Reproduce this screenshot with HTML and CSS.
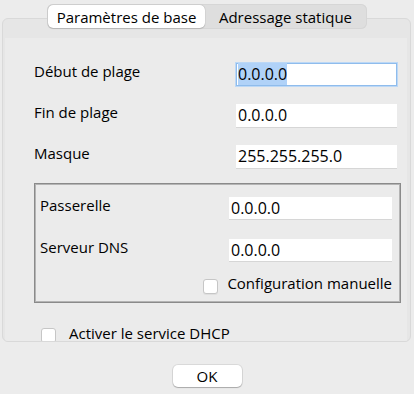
FILE: index.html
```html
<!DOCTYPE html>
<html lang="fr">
<head>
    <meta charset="UTF-8">
    <meta name="viewport" content="width=device-width, initial-scale=1.0">
    <title>DHCP</title>
    <link rel="stylesheet" href="styles.css">
</head>
<body>
    <div class="dialog">
        <div class="tabs">
            <div class="tab tab-active">Paramètres de base</div>
            <div class="tab">Adressage statique</div>
        </div>

        <div class="panel">
            <div class="content">
                <div class="row">
                    <span class="label">Début de plage</span>
                    <div class="field field-focus"><span class="sel">0.0.0.0</span></div>
                </div>
                <div class="row">
                    <span class="label">Fin de plage</span>
                    <div class="field">0.0.0.0</div>
                </div>
                <div class="row">
                    <span class="label">Masque</span>
                    <div class="field">255.255.255.0</div>
                </div>

                <div class="group">
                    <div class="row row-small">
                        <span class="label">Passerelle</span>
                        <div class="field">0.0.0.0</div>
                    </div>
                    <div class="row row-small">
                        <span class="label">Serveur DNS</span>
                        <div class="field">0.0.0.0</div>
                    </div>
                    <label class="check check-right">
                        <span class="box"></span>
                        <span>Configuration manuelle</span>
                    </label>
                </div>

                <label class="check check-dhcp">
                    <span class="box"></span>
                    <span>Activer le service DHCP</span>
                </label>
            </div>
        </div>

        <div class="actions">
            <button class="btn">OK</button>
        </div>
    </div>
</body>
</html>
```

FILE: styles.css
```css
body {
    margin: 0;
    background-color: #ececec;
    font-family: "Open Sans", "Liberation Sans", sans-serif;
    color: #000;
}
.dialog {
    height: 394px;
    display: flex;
    flex-direction: column;
}
.tabs {
    position: relative;
    z-index: 1;
    align-self: center;
    display: flex;
    width: 320px;
    height: 25px;
    margin-top: 4px;
    margin-bottom: -11px;
    padding: 1px;
    box-sizing: border-box;
    background-color: #dedede;
    border-radius: 6px;
    box-shadow: inset 0 0 0 1px #d6d6d6;
}
.tab {
    flex: 1;
    display: flex;
    align-items: center;
    justify-content: center;
    font-size: 15px;
    color: #000;
}
.tab-active {
    flex: 0 0 157px;
    background: white;
    border-radius: 5px;
    box-shadow: 0 0 1px rgba(0,0,0,0.35), 0 1px 1px rgba(0,0,0,0.12);
}
.panel {
    height: 324px;
    margin: 0 3px 0 2px;
    box-sizing: border-box;
    border: 1px solid #d9d9d9;
    border-radius: 6px;
    background-color: #e6e6e6;
    overflow: hidden;
    display: flex;
}
.content {
    flex: 1;
    margin: 19px 3px 0 2px;
    padding: 25px 6px 0 29px;
    background-color: #ebebeb;
}
.row {
    display: flex;
    align-items: flex-start;
    margin-right: 4px;
    margin-bottom: 18px;
}
.label {
    flex: 1;
    font-size: 15px;
    line-height: 16px;
}
.field {
    width: 161px;
    height: 23px;
    box-sizing: border-box;
    padding: 0 2px;
    background: white;
    font-size: 16px;
    line-height: 23px;
    box-shadow: 0 1px 0 #d6d6d6;
}
.field-focus {
    box-shadow: inset 0 0 0 1px #8fbcec, 0 0 0 1px #bcd8f6;
}
.sel {
    background-color: #b0d2f8;
}
.group {
    margin-top: -3px;
    padding: 13px 8px 8px 5px;
    border: 1px solid #8a8a8a;
    box-shadow: inset 0 0 0 1px #b4b4b4;
}
.row-small {
    margin-right: 0;
    margin-bottom: 20px;
}
.row-small .field {
    width: 163px;
    height: 22px;
    line-height: 22px;
}
.row-small + .row-small {
    margin-bottom: 14px;
}
.check {
    display: flex;
    align-items: flex-start;
    font-size: 15px;
    line-height: 16px;
}
.check-right {
    justify-content: flex-end;
    gap: 9px;
}
.box {
    width: 15px;
    height: 15px;
    margin-top: 4px;
    box-sizing: border-box;
    background: white;
    border: 1px solid #c6c6c6;
    border-radius: 3px;
    box-shadow: 0 1px 0 rgba(0,0,0,0.05);
}
.check-dhcp {
    margin-top: 22px;
    margin-left: 7px;
    gap: 13px;
}
.check-dhcp .box {
    margin-top: 3px;
}
.actions {
    display: flex;
    justify-content: center;
    margin-top: 23px;
}
.btn {
    width: 69px;
    height: 22px;
    padding: 0;
    border: none;
    border-radius: 5px;
    background: white;
    font-family: "Open Sans", "Liberation Sans", sans-serif;
    font-size: 15px;
    color: #000;
    box-shadow: 0 0 0 1px rgba(0,0,0,0.08), 0 1px 1px rgba(0,0,0,0.22);
}
```
